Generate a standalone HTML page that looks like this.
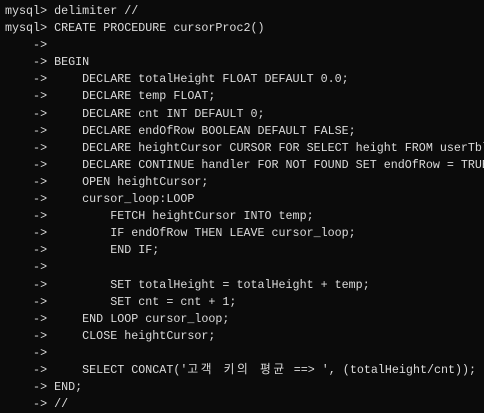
<!DOCTYPE html>
<html><head><meta charset="utf-8"><style>
html,body{margin:0;padding:0;background:#0b0b0b;width:484px;height:413px;overflow:hidden}
pre{margin:0;padding:3px 0 0 5px;font-family:"Liberation Mono","Noto Sans CJK KR",monospace;font-size:11.7px;line-height:17.1px;color:#dcdcdc;white-space:pre}
.k{letter-spacing:2.6px}
</style></head><body><pre>mysql&gt; delimiter //
mysql&gt; CREATE PROCEDURE cursorProc2()
    -&gt;
    -&gt; BEGIN
    -&gt;     DECLARE totalHeight FLOAT DEFAULT 0.0;
    -&gt;     DECLARE temp FLOAT;
    -&gt;     DECLARE cnt INT DEFAULT 0;
    -&gt;     DECLARE endOfRow BOOLEAN DEFAULT FALSE;
    -&gt;     DECLARE heightCursor CURSOR FOR SELECT height FROM userTbl;
    -&gt;     DECLARE CONTINUE handler FOR NOT FOUND SET endOfRow = TRUE;
    -&gt;     OPEN heightCursor;
    -&gt;     cursor_loop:LOOP
    -&gt;         FETCH heightCursor INTO temp;
    -&gt;         IF endOfRow THEN LEAVE cursor_loop;
    -&gt;         END IF;
    -&gt;
    -&gt;         SET totalHeight = totalHeight + temp;
    -&gt;         SET cnt = cnt + 1;
    -&gt;     END LOOP cursor_loop;
    -&gt;     CLOSE heightCursor;
    -&gt;
    -&gt;     SELECT CONCAT('<span class="k">고객 키의 평균</span> ==&gt; ', (totalHeight/cnt));
    -&gt; END;
    -&gt; //</pre></body></html>
